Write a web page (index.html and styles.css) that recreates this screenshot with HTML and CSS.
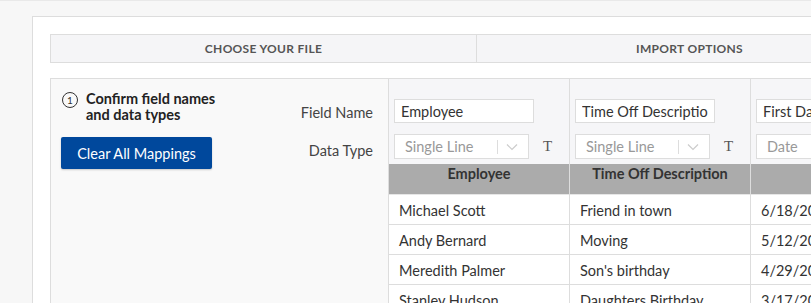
FILE: index.html
```html
<!DOCTYPE html>
<html lang="en">
<head>
    <meta charset="UTF-8">
    <meta name="viewport" content="width=device-width, initial-scale=1.0">
    <title>Import Data</title>
    <link rel="stylesheet" href="styles.css">
</head>
<body>
    <div class="card">
        <div class="tabs">
            <div class="tab">Choose Your File</div>
            <div class="tab">Import Options</div>
        </div>

        <div class="mapper">
            <div class="intro">
                <div class="intro-main">
                    <div class="step">
                        <span class="step-num">1</span>
                        <span class="step-title">Confirm field names and data types</span>
                    </div>
                    <button class="btn-primary">Clear All Mappings</button>
                </div>
                <div class="intro-labels">
                    <div class="label">Field Name</div>
                    <div class="label">Data Type</div>
                </div>
            </div>

            <div class="column">
                <div class="column-config">
                    <input class="field-input" type="text" value="Employee">
                    <div class="type-row">
                        <div class="select">
                            <span class="select-value">Single Line</span>
                            <span class="select-sep"></span>
                            <svg class="chevron" width="12" height="8" viewBox="0 0 12 8"><path d="M1 1.5l5 5 5-5" fill="none" stroke="#ccc" stroke-width="1.2"/></svg>
                        </div>
                        <span class="type-icon">T</span>
                    </div>
                </div>
                <div class="column-head">Employee</div>
                <div class="cell">Michael Scott</div>
                <div class="cell">Andy Bernard</div>
                <div class="cell">Meredith Palmer</div>
                <div class="cell">Stanley Hudson</div>
            </div>

            <div class="column">
                <div class="column-config">
                    <input class="field-input" type="text" value="Time Off Description">
                    <div class="type-row">
                        <div class="select">
                            <span class="select-value">Single Line</span>
                            <span class="select-sep"></span>
                            <svg class="chevron" width="12" height="8" viewBox="0 0 12 8"><path d="M1 1.5l5 5 5-5" fill="none" stroke="#ccc" stroke-width="1.2"/></svg>
                        </div>
                        <span class="type-icon">T</span>
                    </div>
                </div>
                <div class="column-head">Time Off Description</div>
                <div class="cell">Friend in town</div>
                <div class="cell">Moving</div>
                <div class="cell">Son's birthday</div>
                <div class="cell">Daughters Birthday</div>
            </div>

            <div class="column">
                <div class="column-config">
                    <input class="field-input" type="text" value="First Day">
                    <div class="type-row">
                        <div class="select">
                            <span class="select-value">Date</span>
                            <span class="select-sep"></span>
                            <svg class="chevron" width="12" height="8" viewBox="0 0 12 8"><path d="M1 1.5l5 5 5-5" fill="none" stroke="#ccc" stroke-width="1.2"/></svg>
                        </div>
                    </div>
                </div>
                <div class="column-head">First Day</div>
                <div class="cell">6/18/2020</div>
                <div class="cell">5/12/2020</div>
                <div class="cell">4/29/2020</div>
                <div class="cell">3/17/2020</div>
            </div>
        </div>
    </div>
</body>
</html>
```

FILE: styles.css
```css
html, body {
    overflow: hidden;
}

body {
    margin: 0;
    padding: 15px 0 0 32px;
    background-color: #f7f7f7;
    border-top: 1px solid #e9e9e9;
    font-family: Lato, 'Open Sans', sans-serif;
    color: #333;
}

.card {
    width: 1000px;
    height: 400px;
    background: white;
    border: 1px solid #ddd;
    padding: 17px 0 0 17px;
}

.tabs {
    display: flex;
    height: 27px;
    border: 1px solid #ddd;
    background-color: #f5f5f7;
}

.tab {
    width: 425px;
    display: flex;
    align-items: center;
    justify-content: center;
    font-size: 12px;
    font-weight: bold;
    text-transform: uppercase;
    letter-spacing: 0.3px;
    color: #555;
}

.tab + .tab {
    border-left: 1px solid #ddd;
}

.mapper {
    display: flex;
    margin-top: 15px;
    border: 1px solid #ddd;
    height: 300px;
    background-color: #f6f6f8;
}

.intro {
    width: 322px;
    padding-right: 15px;
    display: flex;
    justify-content: space-between;
    background-color: #f9f9f9;
    border-right: 1px solid #ddd;
}

.intro-main {
    padding: 12px 0 0 10px;
}

.step {
    display: flex;
    align-items: flex-start;
    gap: 8px;
    width: 170px;
    padding-left: 1px;
}

.step-num {
    flex: none;
    box-sizing: border-box;
    width: 16px;
    height: 16px;
    border: 1.3px solid #333;
    border-radius: 50%;
    font-size: 10px;
    line-height: 14px;
    text-align: center;
    margin-top: 1px;
}

.step-title {
    font-size: 14.5px;
    font-weight: bold;
    line-height: 16px;
    color: #222;
}

.btn-primary {
    margin-top: 14px;
    width: 151px;
    height: 32px;
    background-color: #00489c;
    color: white;
    border: none;
    border-radius: 2px;
    font-family: inherit;
    font-size: 14.5px;
    box-shadow: 0 1px 2px rgba(0,0,0,0.2);
}

.intro-labels {
    padding-top: 25px;
    text-align: right;
}

.label {
    font-size: 14.5px;
    color: #444;
    height: 38px;
}

.column {
    flex: none;
    width: 180px;
    border-right: 1px solid #ddd;
}

.column-config {
    padding: 20px 0 5px 5px;
}

.field-input {
    display: block;
    box-sizing: border-box;
    width: 140px;
    height: 24px;
    border: 1px solid #ddd;
    padding: 0 6px;
    font-family: inherit;
    font-size: 14.5px;
    color: #333;
    background: white;
}

.type-row {
    display: flex;
    align-items: center;
    margin-top: 11px;
    gap: 14px;
}

.select {
    box-sizing: border-box;
    width: 135px;
    height: 25px;
    border: 1px solid #ddd;
    background: white;
    display: flex;
    align-items: center;
    padding: 0 10px;
}

.select-value {
    flex: 1;
    font-size: 14.5px;
    color: #999;
}

.select-sep {
    width: 1px;
    height: 14px;
    background-color: #ddd;
    margin-right: 8px;
}

.type-icon {
    font-family: 'Liberation Serif', serif;
    font-size: 15px;
    font-weight: normal;
    color: #555;
}

.column-head {
    height: 30px;
    background-color: #ababab;
    border-bottom: 1px solid #e6e6e6;
    font-size: 14.5px;
    font-weight: bold;
    text-align: center;
    line-height: 20px;
    color: #333;
}

.cell {
    height: 29px;
    line-height: 31px;
    padding-left: 10px;
    background: white;
    border-bottom: 1px solid #ddd;
    font-size: 14.5px;
    color: #333;
}
```
